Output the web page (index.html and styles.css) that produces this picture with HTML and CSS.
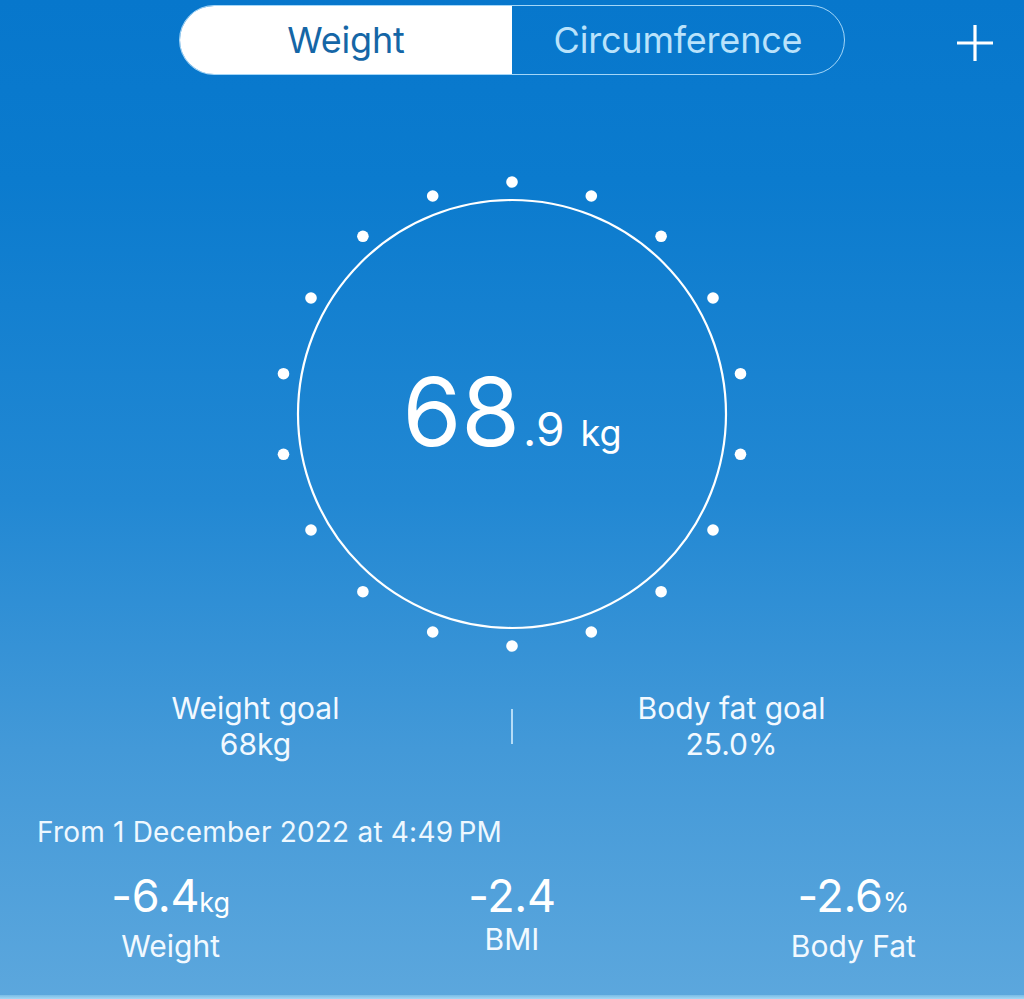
FILE: index.html
```html
<!DOCTYPE html>
<html>
<head>
<meta charset="utf-8">
<link rel="stylesheet" href="styles.css">
</head>
<body>
<div class="screen">
  <header class="topbar">
    <div class="spacer"></div>
    <div class="segmented">
      <div class="seg seg-active">Weight</div>
      <div class="seg">Circumference</div>
    </div>
    <div class="actions">
      <svg class="plus" width="40" height="40" viewBox="0 0 40 40"><path d="M20 2V38M2 20H38" stroke="#fff" stroke-width="3.2" fill="none"/></svg>
    </div>
  </header>

  <section class="gauge">
    <svg class="ring" width="480" height="480" viewBox="0 0 480 480">
      <circle cx="240" cy="240" r="214" fill="none" stroke="#fff" stroke-width="2.2"/>
      <g fill="#fff">
        <circle cx="240.0" cy="8.0" r="5.8"/>
        <circle cx="319.3" cy="22.0" r="5.8"/>
        <circle cx="389.1" cy="62.3" r="5.8"/>
        <circle cx="441.0" cy="124.0" r="5.8"/>
        <circle cx="468.5" cy="199.7" r="5.8"/>
        <circle cx="468.5" cy="280.3" r="5.8"/>
        <circle cx="441.0" cy="356.0" r="5.8"/>
        <circle cx="389.1" cy="417.7" r="5.8"/>
        <circle cx="319.3" cy="458.0" r="5.8"/>
        <circle cx="240.0" cy="472.0" r="5.8"/>
        <circle cx="160.7" cy="458.0" r="5.8"/>
        <circle cx="90.9" cy="417.7" r="5.8"/>
        <circle cx="39.0" cy="356.0" r="5.8"/>
        <circle cx="11.5" cy="280.3" r="5.8"/>
        <circle cx="11.5" cy="199.7" r="5.8"/>
        <circle cx="39.0" cy="124.0" r="5.8"/>
        <circle cx="90.9" cy="62.3" r="5.8"/>
        <circle cx="160.7" cy="22.0" r="5.8"/>
      </g>
    </svg>
    <div class="reading">
      <span class="big">68</span><span class="dec">.9</span><span class="unit">kg</span>
    </div>
  </section>

  <section class="goals">
    <div class="goal goal-left">
      <div class="goal-title">Weight goal</div>
      <div class="goal-value">68kg</div>
    </div>
    <div class="divider"></div>
    <div class="goal goal-right">
      <div class="goal-title">Body fat goal</div>
      <div class="goal-value">25.0%</div>
    </div>
  </section>

  <div class="since">From 1 December 2022 at 4:49&#8201;PM</div>

  <section class="stats">
    <div class="stat">
      <div class="stat-value">-6.4<span class="stat-unit">kg</span></div>
      <div class="stat-label">Weight</div>
    </div>
    <div class="stat">
      <div class="stat-value">-2.4</div>
      <div class="stat-label">BMI</div>
    </div>
    <div class="stat">
      <div class="stat-value">-2.6<span class="stat-unit">%</span></div>
      <div class="stat-label">Body Fat</div>
    </div>
  </section>
  <div class="bottom-strip"></div>
</div>
</body>
</html>
```

FILE: styles.css
```css
* { box-sizing: border-box; }
html, body { margin: 0; padding: 0; }
body {
  width: 1024px;
  height: 999px;
  overflow: hidden;
  font-family: "Inter", "Liberation Sans", sans-serif;
  color: #fff;
}
.screen {
  width: 1024px;
  height: 999px;
  display: flex;
  flex-direction: column;
  background: linear-gradient(180deg, #0777cc 0%, #0b7bce 18%, #2288d3 50%, #4399d8 75%, #5ca7dd 100%);
}
.topbar {
  display: grid;
  grid-template-columns: 1fr auto 1fr;
  align-items: center;
  padding-top: 0;
  height: 80px;
}
.segmented {
  width: 666px;
  height: 70px;
  border-radius: 35px;
  border: 1.5px solid rgba(190, 230, 255, 0.85);
  display: flex;
  overflow: hidden;
}
.seg {
  flex: 1;
  display: flex;
  align-items: center;
  justify-content: center;
  font-size: 36px;
  letter-spacing: -0.2px;
  color: #b9e2fb;
}
.seg-active {
  background: #fff;
  color: #1566a6;
}
.actions {
  display: flex;
  justify-content: flex-end;
  padding-right: 29px;
  padding-top: 6px;
}
.plus { display: block; }
.gauge {
  position: relative;
  width: 480px;
  height: 480px;
  margin: 94px auto 0;
}
.ring { display: block; }
.reading {
  position: absolute;
  inset: 0;
  display: flex;
  align-items: baseline;
  justify-content: center;
  padding-top: 190px;
  line-height: 1;
}
.big { font-size: 95px; font-weight: 400; letter-spacing: 0; }
.dec { font-size: 46px; margin-left: 3px; }
.unit { font-size: 36px; margin-left: 16px; }
.goals {
  display: flex;
  align-items: center;
  margin-top: 36px;
}
.goal {
  display: flex;
  flex-direction: column;
  align-items: center;
  font-size: 30px;
  line-height: 36px;
  color: #f2f9ff;
}
.goal-left { width: 511px; }
.goal-right { width: 437px; }
.divider {
  width: 2px;
  height: 35px;
  background: rgba(210, 238, 255, 0.8);
}
.since {
  margin-top: 55px;
  padding-left: 37px;
  font-size: 28px;
  line-height: 30px;
  letter-spacing: 0.2px;
  color: #eef8ff;
}
.stats {
  display: grid;
  grid-template-columns: repeat(3, 1fr);
  margin-top: 24px;
}
.stat {
  display: flex;
  flex-direction: column;
  align-items: center;
}
.stat-value {
  font-size: 45px;
  line-height: 50px;
  letter-spacing: -0.3px;
}
.stat-unit { font-size: 27px; letter-spacing: 0; }
.stat-label {
  font-size: 30px;
  line-height: 36px;
  color: #f2f9ff;
}
.bottom-strip {
  margin-top: auto;
  height: 4px;
  background: linear-gradient(180deg, #79bce6, #a5d8f5);
}
```
